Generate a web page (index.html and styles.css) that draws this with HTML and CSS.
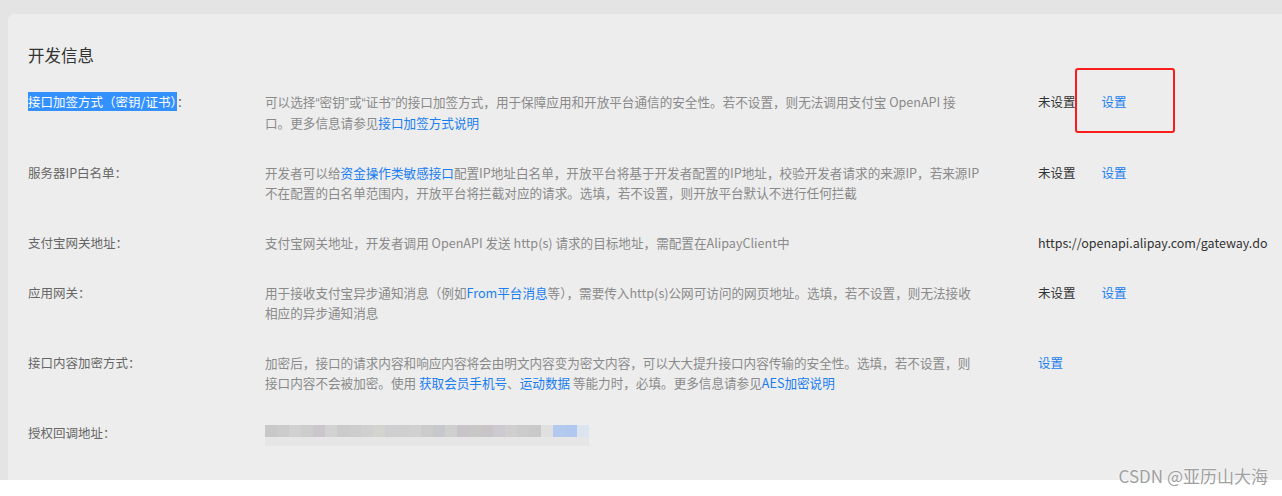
FILE: index.html
```html
<!DOCTYPE html>
<html lang="zh-CN">

<head>
    <meta charset="UTF-8" />
    <meta name="viewport" content="width=device-width, initial-scale=1.0" />
    <title>开发信息</title>
    <link rel="stylesheet" href="styles.css">
</head>

<body>
    <div class="page">
        <div class="card">
            <h2 class="card-title">开发信息</h2>

            <div class="info-row">
                <div class="info-label"><span class="selected">接口加签方式（密钥/证书）</span>：</div>
                <div class="info-desc">可以选择<span class="q">“</span>密钥<span class="q">”</span>或<span class="q">“</span>证书<span class="q">”</span>的接口加签方式，用于保障应用和开放平台通信的安全性。若不设置，则无法调用支付宝 OpenAPI 接<br>口。更多信息请参见<a href="#">接口加签方式说明</a></div>
                <div class="info-value">
                    <span class="status">未设置</span>
                    <a href="#" class="action">设置</a>
                </div>
            </div>

            <div class="info-row">
                <div class="info-label">服务器IP白名单：</div>
                <div class="info-desc">开发者可以给<a href="#">资金操作类敏感接口</a>配置IP地址白名单，开放平台将基于开发者配置的IP地址，校验开发者请求的来源IP，若来源IP<br>不在配置的白名单范围内，开放平台将拦截对应的请求。选填，若不设置，则开放平台默认不进行任何拦截</div>
                <div class="info-value">
                    <span class="status">未设置</span>
                    <a href="#" class="action">设置</a>
                </div>
            </div>

            <div class="info-row">
                <div class="info-label">支付宝网关地址：</div>
                <div class="info-desc">支付宝网关地址，开发者调用 OpenAPI 发送 http(s) 请求的目标地址，需配置在AlipayClient中</div>
                <div class="info-value">
                    <span class="status">https://openapi.alipay.com/gateway.do</span>
                </div>
            </div>

            <div class="info-row">
                <div class="info-label">应用网关：</div>
                <div class="info-desc">用于接收支付宝异步通知消息（例如<a href="#">From平台消息</a>等），需要传入http(s)公网可访问的网页地址。选填，若不设置，则无法接收<br>相应的异步通知消息</div>
                <div class="info-value">
                    <span class="status">未设置</span>
                    <a href="#" class="action">设置</a>
                </div>
            </div>

            <div class="info-row">
                <div class="info-label">接口内容加密方式：</div>
                <div class="info-desc">加密后，接口的请求内容和响应内容将会由明文内容变为密文内容，可以大大提升接口内容传输的安全性。选填，若不设置，则<br>接口内容不会被加密。使用 <a href="#">获取会员手机号</a>、<a href="#">运动数据</a> 等能力时，必填。更多信息请参见<a href="#">AES加密说明</a></div>
                <div class="info-value">
                    <a href="#" class="action">设置</a>
                </div>
            </div>

            <div class="info-row">
                <div class="info-label">授权回调地址：</div>
                <div class="info-desc">
                    <div class="blurred"></div>
                </div>
                <div class="info-value"></div>
            </div>
        </div>

        <div class="mark-box"></div>
        <div class="watermark">CSDN @亚历山大海</div>
    </div>
</body>

</html>
```

FILE: styles.css
```css
html,
body {
    height: 496px;
}

body {
    margin: 0;
    background: #fff;
    font-family: "Noto Sans CJK SC", "Liberation Sans", sans-serif;
    overflow: hidden;
}

.page {
    position: relative;
    height: 480px;
    padding: 14px 0 0 8px;
    box-sizing: border-box;
    background: #e4e4e4;
}

.card {
    height: 100%;
    padding: 30px 0 0 20px;
    box-sizing: border-box;
    background: #ededed;
    border-radius: 6px 0 0 0;
}

.card-title {
    margin: 0 0 26px;
    font-size: 16.5px;
    line-height: 22px;
    font-weight: normal;
    color: #333;
}

.info-row {
    display: grid;
    grid-template-columns: 237px 773px 1fr;
    margin-bottom: 30px;
    font-size: 12.5px;
    line-height: 20px;
}

.info-label {
    color: #666;
}

.selected {
    background: #3390ff;
    color: #fff;
}

.info-desc {
    font-size: 12.6px;
    color: #8a8a8a;
    white-space: nowrap;
}

/* narrow curly quotes like the original font */
.q {
    font-family: "Liberation Sans", sans-serif;
}

.info-desc a,
.action {
    color: #1a7df0;
    text-decoration: none;
}

.info-value {
    display: flex;
    gap: 26px;
}

.status {
    color: #333;
}

.blurred {
    width: 324px;
    height: 12px;
    margin-top: 2px;
    border-bottom: 9px solid #e6e6e6;
    background: linear-gradient(to right,
            #c8c8c8 0 12px, #cbcbcb 12px 24px, #d0d1d0 24px 36px, #cdcdcd 36px 48px,
            #cac6cc 48px 60px, #d2d2d2 60px 72px, #cbcbcb 72px 84px, #cdcdcd 84px 96px,
            #d0d0d0 96px 108px, #d4d4cf 108px 120px, #cfcfd1 120px 132px, #cfcfcf 132px 144px,
            #d2d1d1 144px 156px, #cbcbcb 156px 168px, #c5c9cd 168px 180px, #d0cfcf 180px 192px,
            #c9c3ca 192px 204px, #c8c8c6 204px 216px, #c8c4c8 216px 228px, #cdc9d1 228px 240px,
            #d0cecf 240px 252px, #cccbcb 252px 264px, #c8c9c8 264px 276px, #e0e0e0 276px 288px,
            #b4c9ee 288px 300px, #b0c8f0 300px 312px, #dce4f0 312px 324px);
}

/* red annotation drawn over the first "设置" */
.mark-box {
    position: absolute;
    left: 1075px;
    top: 68px;
    width: 100px;
    height: 65px;
    box-sizing: border-box;
    border: 2px solid #fb1c1c;
    border-radius: 3px;
}

.watermark {
    position: absolute;
    right: 14px;
    top: 464px;
    font-size: 17px;
    line-height: 24px;
    color: #a0a0a0;
    text-shadow: 0 0 2px #fff;
    white-space: nowrap;
}
```
